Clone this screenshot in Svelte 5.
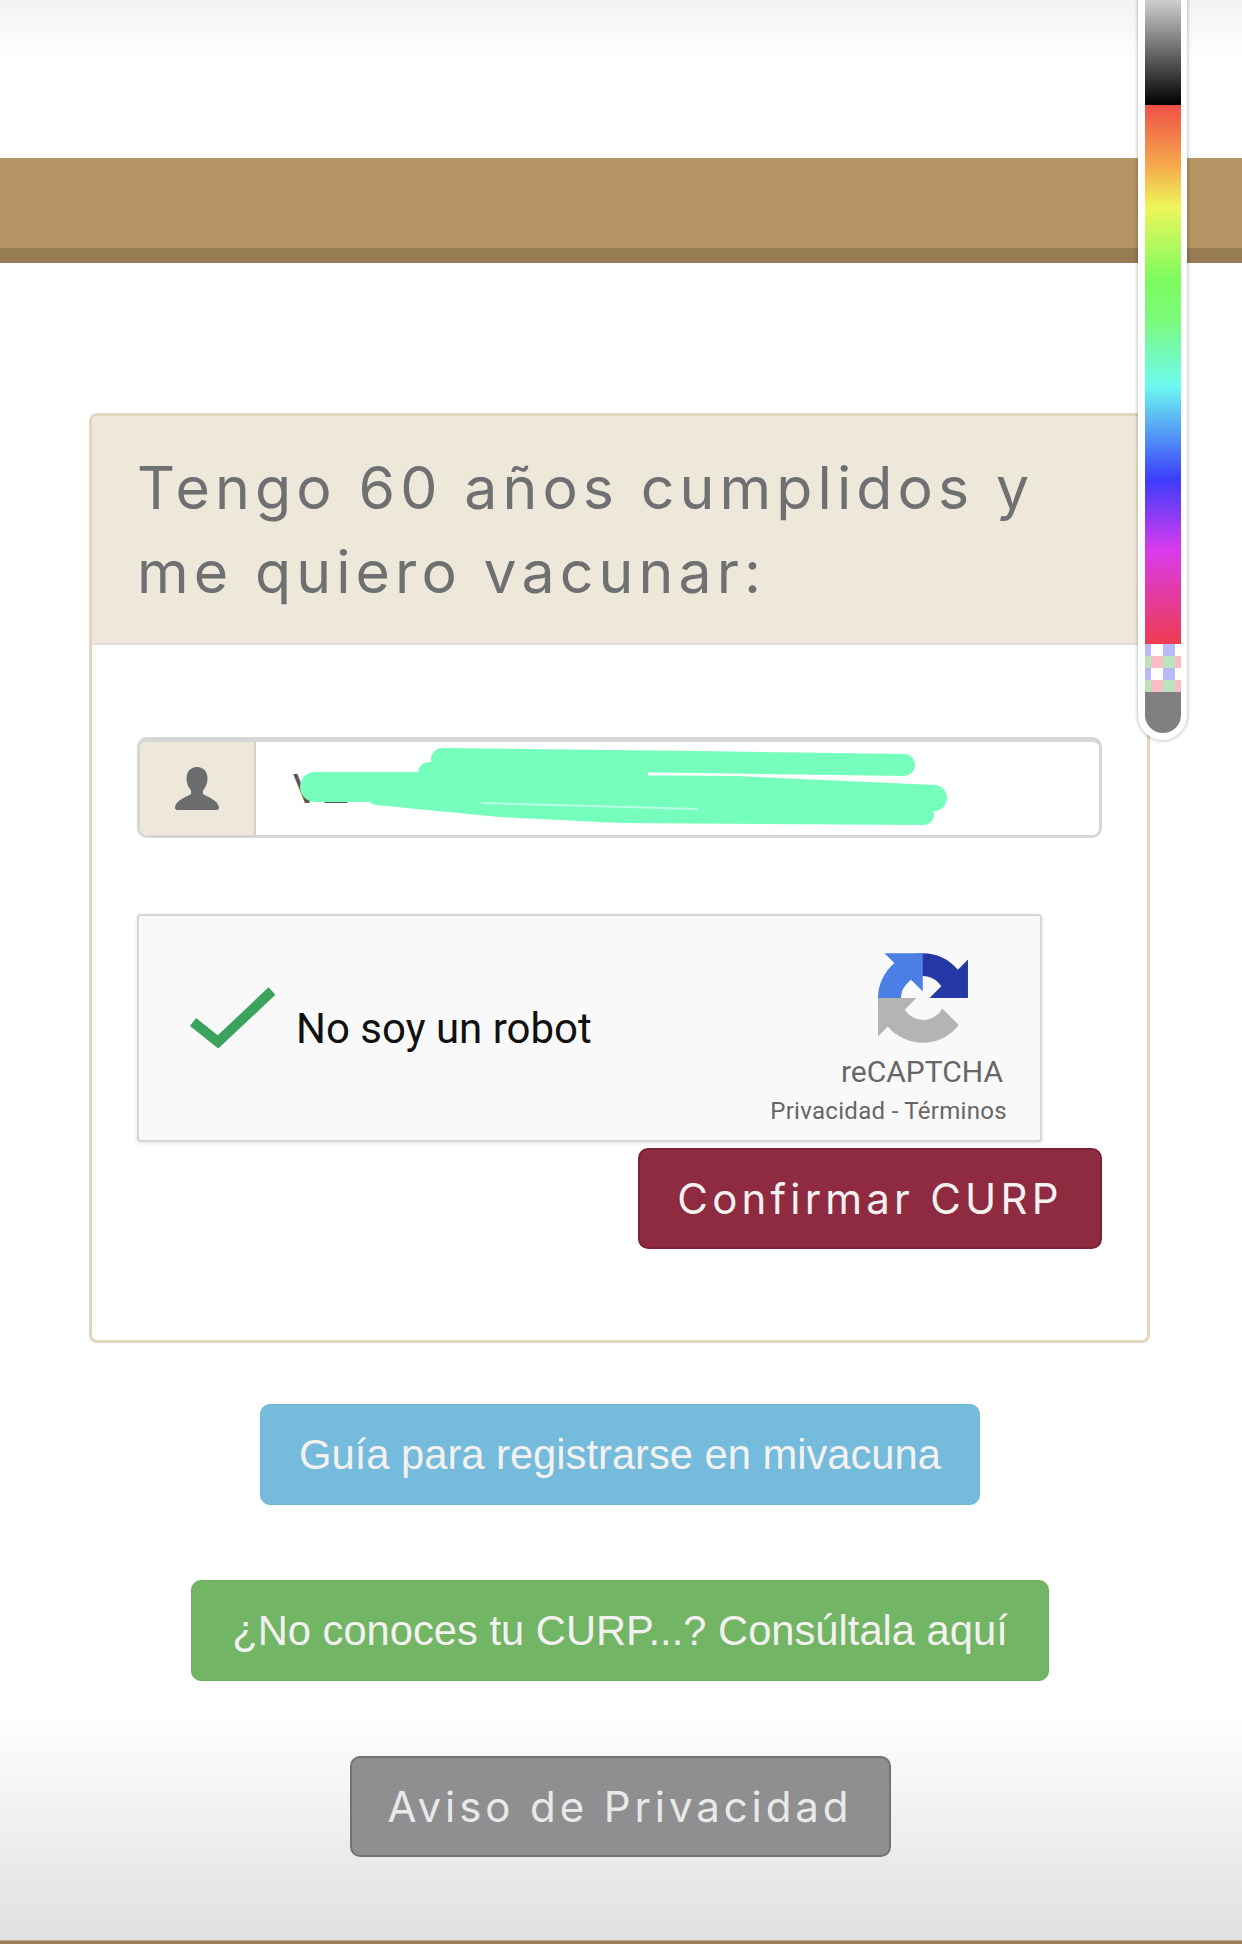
<script>
  // checker strip at the bottom of the colour slider
  const checkerRows = [
    ['#b9b9f8', '#fff', '#b9b9f8', '#fff'],
    ['#b9e2bd', '#f8bcc4', '#b9e2bd', '#f8bcc4'],
    ['#b9b9f8', '#fff', '#b9b9f8', '#fff'],
    ['#b9e2bd', '#f8bcc4', '#b9e2bd', '#f8bcc4']
  ];
</script>

<div class="page">
  <div class="band"></div>

  <section class="panel">
    <h1 class="panel-head">Tengo 60 años cumplidos y<br />me quiero vacunar:</h1>
    <div class="panel-body">
      <div class="input-group">
        <span class="addon">
          <svg width="46" height="46" viewBox="0 0 46 46" aria-hidden="true">
            <path
              fill="#6b6d6e"
              d="M23 1c-7 0-10.500 5-10.500 11.500 0 5 2 9 4.500 12v3.500c-4 3-14 5-16 13-.3 1.500.5 3 2.500 3h39c2 0 2.800-1.500 2.500-3-2-8-12-10-16-13v-3.500c2.500-3 4.500-7 4.500-12C33.500 6 30 1 23 1z"
            />
          </svg>
        </span>
        <div class="input-value">VE</div>
        <svg class="scribble" width="965" height="101" viewBox="0 0 965 101" aria-hidden="true">
          <g fill="none" stroke="#76ffbc" stroke-linecap="round">
            <path stroke-width="22" d="M305 22 L560 25 L767 28" />
            <path stroke-width="22" d="M292 36 L500 38" />
            <path stroke-width="30" d="M178 50 L300 50" />
            <path stroke-width="26" d="M300 50 L600 52 L797 61" />
            <path stroke-width="22" d="M300 60 L560 62 L797 63" />
            <path stroke-width="20" d="M240 58 L363 70 L483 76 L787 78" />
            <path stroke-width="2" stroke="#b6ffe6" d="M345 66 L560 72" />
          </g>
        </svg>
      </div>

      <div class="captcha">
        <svg class="check" width="88" height="66" viewBox="0 0 88 66" aria-hidden="true">
          <path d="M3 36 L28 56 L82 5" fill="none" stroke="#3ca35f" stroke-width="10" />
        </svg>
        <span class="captcha-label">No soy un robot</span>
        <div class="captcha-brand">
          <svg class="brand-logo" width="90" height="90" viewBox="0 0 64 64" aria-hidden="true">
            <path fill="#2539a6" d="M64 31.955l-.033-1.37V4.687l-7.16 7.16C50.948 4.674 42.033.093 32.05.093c-10.4 0-19.622 4.96-25.458 12.64l11.736 11.86a15.55 15.55 0 0 1 4.754-5.334c2.05-1.6 4.952-2.906 8.968-2.906.485 0 .86.057 1.135.163 4.976.393 9.288 3.14 11.828 7.124l-8.307 8.307 32.3.01" />
            <path fill="#4b7fe6" d="M31.862.094l-1.37.033H4.594l7.16 7.16C4.58 13.147 0 22.06 0 32.046c0 10.400 4.960 19.622 12.640 25.458l11.860-11.736a15.550 15.550 0 0 1-5.334-4.754c-1.600-2.050-2.906-4.952-2.906-8.968 0-.485.057-.860.163-1.135.393-4.976 3.140-9.288 7.124-11.828l8.307 8.307L31.862.094" />
            <path fill="#b4b4b4" d="M.001 32.045l.033 1.370v25.898l7.160-7.160c5.860 7.173 14.774 11.754 24.760 11.754 10.400 0 19.622-4.960 25.458-12.640l-11.736-11.860a15.550 15.550 0 0 1-4.754 5.334c-2.050 1.600-4.952 2.906-8.968 2.906-.485 0-.860-.057-1.135-.163-4.976-.393-9.288-3.140-11.828-7.124l8.307-8.307-32.300-.010" />
          </svg>
          <span class="brand-name">reCAPTCHA</span>
          <span class="brand-links">Privacidad - Términos</span>
        </div>
      </div>

      <div class="actions">
        <button class="btn btn-confirm">Confirmar CURP</button>
      </div>
    </div>
  </section>

  <div class="links">
    <button class="btn btn-guide">Guía para registrarse en mivacuna</button>
    <button class="btn btn-curp">¿No conoces tu CURP...? Consúltala aquí</button>
    <button class="btn btn-privacy">Aviso de Privacidad</button>
  </div>

  <div class="slider">
    <div class="slider-track">
      <div class="slider-colors"></div>
      <div class="slider-checker">
        {#each checkerRows as row}
          <div class="checker-row">
            {#each row as color}
              <span style="background: {color}"></span>
            {/each}
          </div>
        {/each}
      </div>
      <div class="slider-end"></div>
    </div>
  </div>
</div>

<style>
  :global(body) {
    margin: 0;
    background: #fff;
  }

  .page {
    position: relative;
    height: 1944px;
    box-sizing: border-box;
    padding-top: 158px;
    overflow: hidden;
    background:
      linear-gradient(to bottom, #f3f3f3 0, #fff 60px),
      #fff;
    font-family: Inter, "Liberation Sans", sans-serif;
  }

  .page::after {
    content: '';
    position: absolute;
    left: 0;
    right: 0;
    bottom: 0;
    height: 230px;
    background: linear-gradient(to bottom, rgba(224, 224, 224, 0), #e0e0e0 226px, #9c7f55 227px, #9c7f55 230px);
    pointer-events: none;
  }

  .band {
    height: 90px;
    background: #b59563;
    border-bottom: 15px solid #967b53;
  }

  .panel {
    width: 1061px;
    box-sizing: border-box;
    margin: 150px 0 0 89px;
    background: #fff;
    border: 3px solid #e3d6bd;
    border-radius: 8px;
    overflow: hidden;
  }

  .panel-head {
    margin: 0;
    height: 229px;
    box-sizing: border-box;
    padding: 30px 20px 0 45px;
    background: #eee8da;
    border-bottom: 2px solid #e2dfdc;
    color: #6f7072;
    font-size: 59px;
    font-weight: 400;
    line-height: 84px;
    letter-spacing: 5.1px;
    white-space: nowrap;
  }

  .panel-body {
    padding: 92px 45px 91px;
  }

  .input-group {
    position: relative;
    display: flex;
    height: 101px;
    box-sizing: border-box;
    border: 3px solid #d6d6d6;
    border-top-width: 5px;
    border-radius: 10px;
    background: #fff;
    overflow: hidden;
  }

  .addon {
    flex: none;
    width: 114px;
    display: flex;
    align-items: center;
    justify-content: center;
    background: #eee8da;
    border-right: 2px solid #d5d0c6;
  }

  .input-value {
    padding-left: 37px;
    font-family: "Liberation Sans", sans-serif;
    font-size: 42px;
    line-height: 93px;
    color: #555;
  }

  .scribble {
    position: absolute;
    left: -3px;
    top: -5px;
  }

  .captcha {
    display: flex;
    align-items: center;
    width: 905px;
    height: 228px;
    box-sizing: border-box;
    margin-top: 76px;
    padding: 0 33px 0 51px;
    background: #f9f9f9;
    border: 2px solid #d6d6d6;
    border-radius: 4px;
    box-shadow: 0 1px 4px rgba(0, 0, 0, 0.12);
  }

  .check {
    flex: none;
    margin-top: -18px;
  }

  .captcha-label {
    margin-left: 18px;
    font-family: Roboto, sans-serif;
    font-size: 42px;
    color: #111;
  }

  .captcha-brand {
    display: flex;
    flex-direction: column;
    align-items: flex-end;
    margin-left: auto;
    margin-top: 26px;
    font-family: Roboto, sans-serif;
    color: #666;
  }

  .brand-logo {
    margin-right: 39px;
  }

  .brand-name {
    margin: 10px 4px 0 0;
    font-size: 30px;
    line-height: 38px;
  }

  .brand-links {
    margin-top: 2px;
    font-size: 24px;
    letter-spacing: 0.3px;
    line-height: 36px;
  }

  .actions {
    display: flex;
    justify-content: flex-end;
    margin-top: 6px;
  }

  .btn {
    display: block;
    height: 101px;
    box-sizing: border-box;
    padding: 0;
    border-radius: 10px;
    color: #f4f1f1;
    font-family: Inter, "Liberation Sans", sans-serif;
    font-size: 42px;
    letter-spacing: 4.2px;
    white-space: nowrap;
  }

  .btn-confirm {
    width: 464px;
    background: #8f2b41;
    border: 2px solid #7c2237;
  }

  .links {
    position: relative;
    z-index: 1;
    display: flex;
    flex-direction: column;
    align-items: center;
    gap: 75px;
    margin-top: 61px;
    padding-right: 2px;
  }

  .btn-guide,
  .btn-curp {
    font-family: "Liberation Sans", sans-serif;
    font-size: 41.7px;
    letter-spacing: 0;
  }

  .btn-guide {
    width: 720px;
    background: #74bbdc;
    border: 1px solid #6fb5d6;
  }

  .btn-curp {
    width: 858px;
    background: #72b564;
    border: 1px solid #6cae5e;
  }

  .btn-privacy {
    width: 541px;
    background: #8f8f91;
    border: 2px solid #727274;
    color: #e9e9e9;
    letter-spacing: 3.9px;
  }

  .slider {
    position: absolute;
    z-index: 2;
    top: -30px;
    left: 1138px;
    width: 49px;
    height: 770px;
    box-sizing: border-box;
    padding: 0 6px 7px 7px;
    background: #fff;
    border-radius: 0 0 25px 25px;
    box-shadow: 0 0 4px rgba(0, 0, 0, 0.35);
  }

  .slider-track {
    display: flex;
    flex-direction: column;
    height: 100%;
    border-radius: 0 0 18px 18px;
    overflow: hidden;
  }

  .slider-colors {
    flex: none;
    height: 674px;
    background: linear-gradient(
      to bottom,
      #cfcfcf 0,
      #cfcfcf 30px,
      #000 135px,
      #ef5148 135px,
      #f5a84b 195px,
      #eef65a 237px,
      #7cfb5f 310px,
      #7cfb7c 350px,
      #6cf9f0 416px,
      #3c3cfb 510px,
      #d93aec 580px,
      #ee3c50 674px
    );
  }

  .slider-checker {
    flex: none;
  }

  .checker-row {
    display: grid;
    grid-template-columns: 6px 12px 12px 6px;
    height: 12px;
  }

  .slider-end {
    flex: 1;
    background: #808080;
  }
</style>
